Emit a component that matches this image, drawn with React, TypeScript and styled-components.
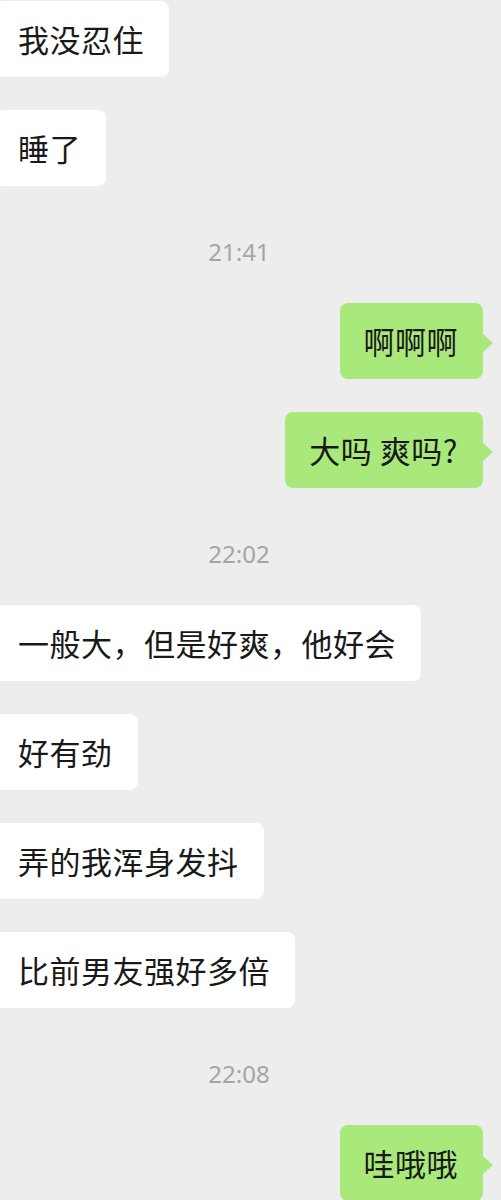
import styled, { createGlobalStyle } from "styled-components";

const GlobalStyle = createGlobalStyle`
  html, body {
    margin: 0;
    padding: 0;
    background: #ededed;
  }
  body {
    font-family: "Noto Sans CJK SC", "Noto Sans", sans-serif;
  }
`;

const Screen = styled.div`
  width: 501px;
  height: 1200px;
  overflow: hidden;
  background: #ededed;
`;

const Thread = styled.div`
  display: flex;
  flex-direction: column;
  gap: 33px;
  padding-top: 1px;
`;

const Row = styled.div<{ $mine?: boolean }>`
  display: flex;
  justify-content: ${(p) => (p.$mine ? "flex-end" : "flex-start")};
  padding-right: ${(p) => (p.$mine ? "18px" : "0")};
`;

const Bubble = styled.div<{ $mine?: boolean }>`
  position: relative;
  box-sizing: border-box;
  height: 76px;
  padding: 16px 25px 17px 24px;
  margin-left: ${(p) => (p.$mine ? "0" : "-6px")};
  border-radius: 8px;
  background: ${(p) => (p.$mine ? "#a9e97c" : "#ffffff")};
  color: #191919;
  font-size: 31px;
  line-height: 43px;
  letter-spacing: 0.5px;
  white-space: nowrap;

  ${(p) =>
    p.$mine &&
    `
    &::after {
      content: "";
      position: absolute;
      right: -10px;
      top: 31px;
      border-left: 10px solid #a9e97c;
      border-top: 9px solid transparent;
      border-bottom: 9px solid transparent;
    }
  `}
`;

const Time = styled.div`
  padding: 21px 23px 6px 0;
  text-align: center;
  font-family: "Noto Sans", "Liberation Sans", sans-serif;
  font-size: 24px;
  line-height: 24px;
  color: #a5a5a5;
`;

type Item =
  | { kind: "time"; text: string }
  | { kind: "msg"; text: string; mine?: boolean };

const items: Item[] = [
  { kind: "msg", text: "我没忍住" },
  { kind: "msg", text: "睡了" },
  { kind: "time", text: "21:41" },
  { kind: "msg", text: "啊啊啊", mine: true },
  { kind: "msg", text: "大吗 爽吗?", mine: true },
  { kind: "time", text: "22:02" },
  { kind: "msg", text: "一般大，但是好爽，他好会" },
  { kind: "msg", text: "好有劲" },
  { kind: "msg", text: "弄的我浑身发抖" },
  { kind: "msg", text: "比前男友强好多倍" },
  { kind: "time", text: "22:08" },
  { kind: "msg", text: "哇哦哦", mine: true },
];

export default function App() {
  return (
    <Screen>
      <GlobalStyle />
      <Thread>
        {items.map((it, i) =>
          it.kind === "time" ? (
            <Time key={i}>{it.text}</Time>
          ) : (
            <Row key={i} $mine={it.mine}>
              <Bubble $mine={it.mine}>{it.text}</Bubble>
            </Row>
          )
        )}
      </Thread>
    </Screen>
  );
}
